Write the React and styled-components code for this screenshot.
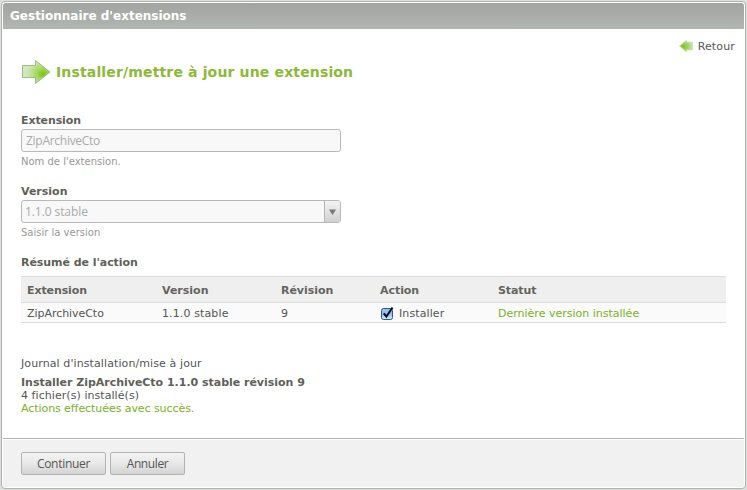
import React from "react";
import styled, { createGlobalStyle } from "styled-components";

const GlobalStyle = createGlobalStyle`
  * { box-sizing: border-box; }
  html, body { margin: 0; height: 100%; background: #dddfdd; overflow: hidden; }
  body { font: 11px/13px Verdana, "DejaVu Sans", sans-serif; color: #555; }
`;

const Window = styled.main`
  display: flex;
  flex-direction: column;
  width: 745px;
  height: 488px;
  margin: 1px;
  padding: 1px;
  border: 1px solid #b0b2b0;
  border-radius: 4px;
  background: #fff;
`;

const TitleBar = styled.header`
  height: 26px;
  padding: 0 7px;
  border-radius: 3px 3px 0 0;
  background: linear-gradient(#a1a4a0, #b2b6b2);
  color: #fff;
  font-size: 12px;
  font-weight: bold;
  line-height: 26px;
`;

const Text = styled.span`
  letter-spacing: ${(p) => p.$track || 0}px;
  white-space: nowrap;
`;

const Content = styled.section`
  height: 409px;
  padding: 10px 18px 0;
`;

const BackLink = styled.a`
  display: flex;
  justify-content: flex-end;
  align-items: center;
  gap: 5px;
  height: 14px;
  margin-right: -9px;
`;

const Heading = styled.h1`
  display: flex;
  align-items: center;
  gap: 5px;
  height: 26px;
  margin: 6px 0 28px;
  padding-left: 1px;
  color: #8aba36;
  font-size: 14px;
`;

const Field = styled.div`
  height: 71px;
`;

const Label = styled.label`
  display: block;
  height: 16px;
  color: #5f5f5a;
  font-weight: bold;
  line-height: 15px;
`;

const Control = styled.div`
  display: flex;
  justify-content: space-between;
  width: 320px;
  height: 23px;
  padding-left: ${(p) => p.$inset}px;
  overflow: hidden;
  border: 1px solid #b9b9b9;
  border-radius: 3px;
  background: #f8f8f8;
  color: #aaa;
  font: 12px/22px "Trebuchet MS", "Open Sans", sans-serif;
`;

const Arrow = styled.span`
  display: grid;
  place-items: center;
  width: 16px;
  border-left: 1px solid #b5b5b5;
  background: linear-gradient(#f4f4f4, #d0d0d0);
`;

const Hint = styled.p`
  margin: 4px 0 0;
  color: #979797;
  font-size: 10px;
  line-height: 12px;
`;

const SummaryTitle = styled.h2`
  height: 21px;
  margin: 0;
  color: #5f5f5a;
  font-size: 11px;
  line-height: 15px;
`;

const Row = styled.div`
  display: grid;
  grid-template-columns: 135px 119px 99px 118px 1fr;
  align-items: center;
  width: 705px;
  height: ${(p) => (p.$head ? 26 : 21)}px;
  padding: 2px 0 0 6px;
  border-top: 1px solid #dcdcdc;
  border-bottom: ${(p) => (p.$head ? "0" : "1px solid #dcdcdc")};
  background: ${(p) => (p.$head ? "#efefef" : "#fafafa")};
  color: ${(p) => (p.$head ? "#64645f" : "#555")};
  font-weight: ${(p) => (p.$head ? "bold" : "normal")};
`;

const ActionCell = styled.div`
  display: flex;
  align-items: center;
  gap: 4px;
`;

const Success = styled.div`
  color: #7cb026;
`;

const Log = styled.div`
  margin-top: 34px;
`;

const LogTitle = styled.p`
  margin: 0 0 6px;
`;

const LogName = styled.div`
  color: #5f5f5a;
  font-weight: bold;
`;

const Footer = styled.footer`
  display: flex;
  gap: 4px;
  height: 49px;
  padding: 13px 18px 0;
  border-top: 1px solid #b4b4b4;
  background: linear-gradient(#fff 1px, #f1f1f1 1px);
`;

const Button = styled.button`
  width: ${(p) => p.$width}px;
  height: 23px;
  padding: 0;
  border: 1px solid #b3b3b3;
  border-radius: 2px;
  background: linear-gradient(#f3f3f3, #e8e8e8 50%, #d3d3d3);
  color: #555;
  font: 12px/19px "Trebuchet MS", "Open Sans", sans-serif;
`;

const BigArrow = () => (
  <svg width="29" height="26" viewBox="0 0 29 26">
    <defs>
      <radialGradient id="bigArrow" cx="0.75" cy="0.58" r="0.65">
        <stop offset="0" stopColor="#78c50a" />
        <stop offset="0.35" stopColor="#a3d75c" />
        <stop offset="0.75" stopColor="#c5e3a5" />
        <stop offset="1" stopColor="#d5e6c4" />
      </radialGradient>
    </defs>
    <path d="M0.5 6.5H13.5V1.5L28 13L13.5 24.5V18.5H0.5Z" fill="url(#bigArrow)" stroke="#9cbd80" />
  </svg>
);

const BackArrow = () => (
  <svg width="14" height="12" viewBox="0 0 14 12">
    <defs>
      <radialGradient id="backArrow" cx="0.3" cy="0.55" r="0.75">
        <stop offset="0" stopColor="#7cc51e" />
        <stop offset="0.5" stopColor="#a5d46a" />
        <stop offset="1" stopColor="#d3e8bd" />
      </radialGradient>
    </defs>
    <path d="M13.3 2.2H7.5V0.3L0.6 6L7.5 11.7V9.8H13.3Z" fill="url(#backArrow)" stroke="#b3d68d" strokeWidth="0.7" />
  </svg>
);

const Check = () => (
  <svg width="15" height="15" viewBox="0 0 15 15">
    <defs>
      <linearGradient id="check" x2="0" y2="1">
        <stop offset="0" stopColor="#9cc4ee" />
        <stop offset="0.5" stopColor="#8fbdec" />
        <stop offset="1" stopColor="#d2f3ff" />
      </linearGradient>
    </defs>
    <rect x="1.5" y="2.5" width="11" height="11" rx="2" fill="url(#check)" stroke="#39538d" />
    <path d="M3.7 7.4L6.4 10.5L12.5 1.5" fill="none" stroke="#08101e" strokeWidth="2" />
  </svg>
);

export default function App() {
  return (
    <>
      <GlobalStyle />
      <Window>
        <TitleBar><Text>Gestionnaire d'extensions</Text></TitleBar>
        <Content>
          <BackLink><BackArrow /><Text $track={0.15}>Retour</Text></BackLink>
          <Heading><BigArrow /><Text $track={0.15}>Installer/mettre à jour une extension</Text></Heading>
          <Field>
            <Label><Text $track={-0.1}>Extension</Text></Label>
            <Control $inset={4}><Text $track={-0.28}>ZipArchiveCto</Text></Control>
            <Hint><Text>Nom de l'extension.</Text></Hint>
          </Field>
          <Field>
            <Label><Text>Version</Text></Label>
            <Control $inset={3}>
              <Text $track={-0.08}>1.1.0 stable</Text>
              <Arrow>
                <svg width="7" height="6" viewBox="0 0 7 6"><path d="M0 0.5H7L3.5 6Z" fill="#777" /></svg>
              </Arrow>
            </Control>
            <Hint><Text>Saisir la version</Text></Hint>
          </Field>
          <SummaryTitle><Text $track={-0.05}>Résumé de l'action</Text></SummaryTitle>
          <Row $head>
            <Text $track={-0.1}>Extension</Text>
            <Text>Version</Text>
            <Text $track={-0.05}>Révision</Text>
            <Text $track={-0.05}>Action</Text>
            <Text $track={-0.1}>Statut</Text>
          </Row>
          <Row>
            <Text $track={-0.05}>ZipArchiveCto</Text>
            <Text $track={0.12}>1.1.0 stable</Text>
            <Text>9</Text>
            <ActionCell><Check /><Text $track={0.1}>Installer</Text></ActionCell>
            <Success><Text>Dernière version installée</Text></Success>
          </Row>
          <Log>
            <LogTitle><Text $track={0.1}>Journal d'installation/mise à jour</Text></LogTitle>
            <LogName><Text $track={-0.02}>Installer ZipArchiveCto 1.1.0 stable révision 9</Text></LogName>
            <div><Text $track={0.06}>4 fichier(s) installé(s)</Text></div>
            <Success><Text $track={-0.07}>Actions effectuées avec succès.</Text></Success>
          </Log>
        </Content>
        <Footer>
          <Button $width={85}><Text $track={-0.3}>Continuer</Text></Button>
          <Button $width={75}><Text $track={-0.4}>Annuler</Text></Button>
        </Footer>
      </Window>
    </>
  );
}
